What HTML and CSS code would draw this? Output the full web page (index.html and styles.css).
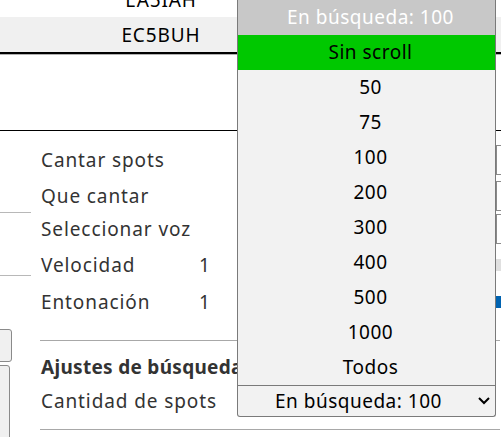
FILE: index.html
```html
<!DOCTYPE html>
<html lang="es">
<head>
<meta charset="utf-8">
<link rel="stylesheet" href="styles.css">
</head>
<body>
<div class="page">
  <div class="table">
    <div class="row row-partial"><span class="cell">EA5IAH</span></div>
    <div class="row row-alt"><span class="cell">EC5BUH</span></div>
  </div>
  <div class="table-rule"></div>
  <div class="spacer"></div>
  <div class="main">
    <div class="leftcol">
      <div class="lc-field f1"></div>
      <div class="lc-field f2"></div>
      <div class="lc-btn b1"></div>
      <div class="lc-btn b2"></div>
    </div>
    <div class="settings">
      <div class="srow r1"><span class="label">Cantar spots</span><span class="val"></span><span class="ctrl combo"></span></div>
      <div class="srow r2"><span class="label">Que cantar</span><span class="val"></span><span class="ctrl combo"></span></div>
      <div class="srow r3"><span class="label">Seleccionar voz</span><span class="val"></span><span class="ctrl combo"></span></div>
      <div class="srow r4"><span class="label">Velocidad</span><span class="val">1</span><span class="ctrl slider"></span></div>
      <div class="srow r5"><span class="label">Entonación</span><span class="val">1</span><span class="ctrl slider blue"></span></div>
      <div class="sep sep1"></div>
      <div class="section">Ajustes de búsqueda</div>
      <div class="srow r6"><span class="label">Cantidad de spots</span></div>
      <div class="sep sep2"></div>
    </div>
  </div>

  <div class="dropdown">
    <div class="popup">
      <div class="opt opt-current">En búsqueda: 100</div>
      <div class="opt opt-hi">Sin scroll</div>
      <div class="opt">50</div>
      <div class="opt">75</div>
      <div class="opt">100</div>
      <div class="opt">200</div>
      <div class="opt">300</div>
      <div class="opt">400</div>
      <div class="opt">500</div>
      <div class="opt">1000</div>
      <div class="opt">Todos</div>
    </div>
    <div class="select">
      <span class="select-text">En búsqueda: 100</span>
      <svg class="chev" width="14" height="10" viewBox="0 0 14 10"><path d="M2 2 L7 7 L12 2" fill="none" stroke="#000" stroke-width="2"/></svg>
    </div>
  </div>
</div>
</body>
</html>
```

FILE: styles.css
```css
* { box-sizing: border-box; }
html, body { margin: 0; padding: 0; }
body {
  width: 501px;
  height: 437px;
  overflow: hidden;
  background: #ffffff;
  font-family: "Noto Sans", "DejaVu Sans", sans-serif;
  font-size: 19px;
  color: #333333;
}
.page { position: relative; width: 501px; height: 437px; overflow: hidden; }

.table { width: 501px; margin-top: -18px; }
.row { height: 35px; display: flex; align-items: center; }
.row-alt { background: #f0f0f0; }
.cell { width: 322px; text-align: center; color: #000; letter-spacing: 0.9px; }
.table-rule { height: 3px; border-top: 2px solid #000; border-bottom: 1px solid #b0b0b0; width: 501px; }

.spacer { height: 76px; border-bottom: 1px solid #000; }

.main { display: flex; }
.leftcol { width: 41px; flex: none; display: flex; flex-direction: column; }
.lc-field { width: 31px; border-bottom: 1px solid #b8b8b8; }
.lc-field.f1 { height: 82px; }
.lc-field.f2 { height: 63px; }
.lc-btn { background: #f0f0f0; border: 1px solid #8a8a8a; border-radius: 3px; margin-left: -6px; }
.lc-btn.b1 { width: 18px; height: 33px; margin-top: 53px; }
.lc-btn.b2 { width: 16px; height: 80px; margin-top: 3px; }

.settings { flex: 1; padding-top: 13px; letter-spacing: 0.9px; }
.srow { display: flex; align-items: center; height: 32px; }
.srow.r2 { margin-top: 4px; }
.srow.r3 { margin-top: 1px; }
.srow.r4 { margin-top: 4px; }
.srow.r5 { margin-top: 5px; }
.label { width: 158px; flex: none; white-space: nowrap; }
.val { width: 297px; flex: none; }
.ctrl { width: 60px; flex: none; }
.ctrl.combo { height: 30px; border: 1px solid #8a8a8a; background: #fff; }
.ctrl.slider { height: 12px; background: #e0e0e0; }
.ctrl.slider.blue { background: #0063b1; }

.sep { height: 1px; background: #a8a8a8; width: 460px; margin-left: -1px; }
.sep1 { margin-top: 22px; }
.section { font-weight: bold; margin-top: 13px; height: 26px; line-height: 26px; white-space: nowrap; letter-spacing: 0.3px; }
.srow.r6 { margin-top: 5px; }
.sep2 { margin-top: 12px; }

.dropdown { position: absolute; left: 237px; top: 0; width: 259px; letter-spacing: 0.5px; }
.popup { background: #f2f2f2; border-left: 1px solid #7a7a7a; border-right: 1px solid #7a7a7a; border-bottom: 1px solid #7a7a7a; }
.opt { height: 35px; line-height: 35px; text-align: center; color: #000; padding-left: 8px; }
.opt-current { background: #c8c8c8; color: #fff; }
.opt-hi { background: #00c800; }
.select { height: 31px; display: flex; align-items: center; background: #f2f2f2; border: 1px solid #7a7a7a; border-top: none; border-radius: 0 0 3px 3px; padding: 0 4px 0 37px; }
.select-text { flex: 1; color: #000; }
.chev { flex: none; }
```
